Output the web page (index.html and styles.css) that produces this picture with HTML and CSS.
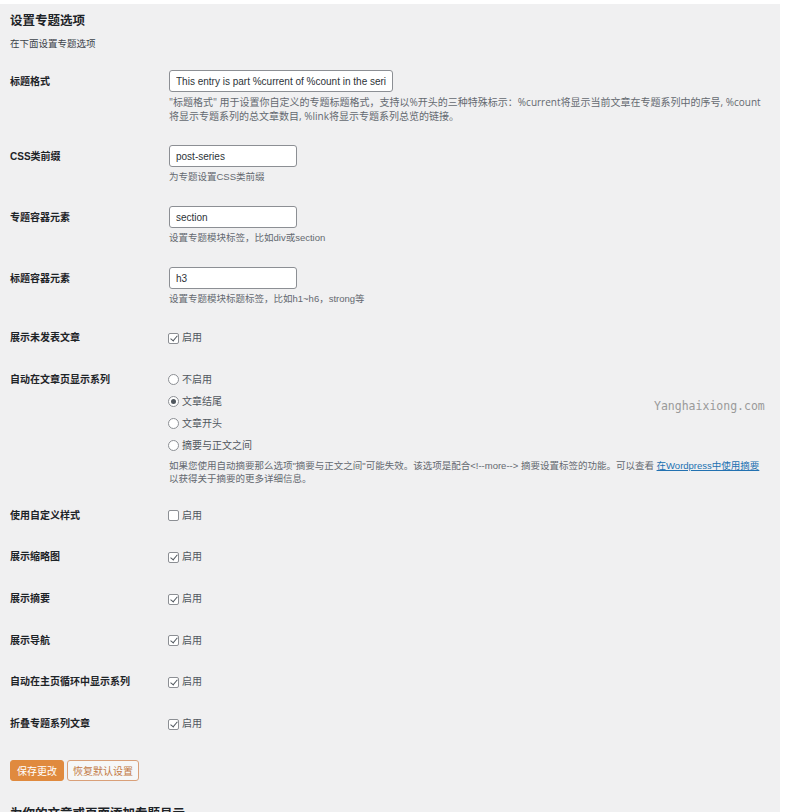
FILE: index.html
```html
<!DOCTYPE html>
<html lang="zh-CN">
<head>
    <meta charset="UTF-8">
    <title>设置专题选项</title>
    <link rel="stylesheet" href="styles.css">
</head>
<body>
    <div class="wrap">
        <h2>设置专题选项</h2>
        <p class="intro">在下面设置专题选项</p>
        <table class="form-table">
            <tr class="text-row">
                <th>标题格式</th>
                <td>
                    <input type="text" class="regular-text" value="This entry is part %current of %count in the series">
                    <p class="description format-help">"标题格式" 用于设置你自定义的专题标题格式，支持以%开头的三种特殊标示：%current将显示当前文章在专题系列中的序号, %count将显示专题系列的总文章数目, %link将显示专题系列总览的链接。</p>
                </td>
            </tr>
            <tr class="text-row">
                <th>CSS类前缀</th>
                <td>
                    <input type="text" class="small-text" value="post-series">
                    <p class="description">为专题设置CSS类前缀</p>
                </td>
            </tr>
            <tr class="text-row">
                <th>专题容器元素</th>
                <td>
                    <input type="text" class="small-text" value="section">
                    <p class="description">设置专题模块标签，比如div或section</p>
                </td>
            </tr>
            <tr class="text-row">
                <th>标题容器元素</th>
                <td>
                    <input type="text" class="small-text" value="h3">
                    <p class="description">设置专题模块标题标签，比如h1~h6，strong等</p>
                </td>
            </tr>
            <tr>
                <th>展示未发表文章</th>
                <td><label class="check"><input type="checkbox" checked> 启用</label></td>
            </tr>
            <tr class="radio-row">
                <th>自动在文章页显示系列</th>
                <td>
                    <label class="radio"><input type="radio" name="auto"> 不启用</label>
                    <label class="radio"><input type="radio" name="auto" checked> 文章结尾</label>
                    <label class="radio"><input type="radio" name="auto"> 文章开头</label>
                    <label class="radio"><input type="radio" name="auto"> 摘要与正文之间</label>
                    <p class="description">如果您使用自动摘要那么选项"摘要与正文之间"可能失效。该选项是配合&lt;!--more--&gt; 摘要设置标签的功能。可以查看 <a href="#">在Wordpress中使用摘要</a> 以获得关于摘要的更多详细信息。</p>
                </td>
            </tr>
            <tr>
                <th>使用自定义样式</th>
                <td><label class="check"><input type="checkbox"> 启用</label></td>
            </tr>
            <tr>
                <th>展示缩略图</th>
                <td><label class="check"><input type="checkbox" checked> 启用</label></td>
            </tr>
            <tr>
                <th>展示摘要</th>
                <td><label class="check"><input type="checkbox" checked> 启用</label></td>
            </tr>
            <tr>
                <th>展示导航</th>
                <td><label class="check"><input type="checkbox" checked> 启用</label></td>
            </tr>
            <tr>
                <th>自动在主页循环中显示系列</th>
                <td><label class="check"><input type="checkbox" checked> 启用</label></td>
            </tr>
            <tr>
                <th>折叠专题系列文章</th>
                <td><label class="check"><input type="checkbox" checked> 启用</label></td>
            </tr>
        </table>
        <p class="submit">
            <button class="button-primary">保存更改</button>
            <button class="button">恢复默认设置</button>
        </p>
        <h2>为你的文章或页面添加专题显示</h2>
        <div class="watermark">Yanghaixiong.com</div>
    </div>
</body>
</html>
```

FILE: styles.css
```css
body {
    margin: 0;
    background-color: #fff;
    font-family: "Liberation Sans", "Noto Sans CJK SC", sans-serif;
    color: #1d2327;
}
.wrap {
    position: relative;
    box-sizing: border-box;
    width: 780px;
    height: 808px;
    margin-top: 4px;
    padding: 9px 0 0 10px;
    background-color: #f0f0f1;
    overflow: hidden;
}
h2 {
    margin: 0;
    font-size: 12.5px;
    line-height: 16px;
    font-weight: bold;
    color: #1d2327;
}
.intro {
    margin: 8px 0 8px;
    font-size: 9.5px;
    line-height: 14px;
    color: #3c434a;
}
.form-table {
    border-collapse: collapse;
    width: 100%;
}
.form-table th {
    width: 159px;
    padding: 14px 0 13.7px;
    text-align: left;
    vertical-align: top;
    font-size: 10px;
    line-height: 14px;
    font-weight: bold;
    color: #1d2327;
}
.form-table td {
    padding: 14px 17px 0 0;
    vertical-align: top;
    font-size: 10px;
    line-height: 14px;
    color: #50575e;
}
.form-table .text-row th {
    padding-top: 16px;
}
.form-table .text-row td {
    padding: 11px 17px 11px 0;
}
.form-table .radio-row td {
    padding: 10px 17px 9px 0;
}
input[type="text"] {
    box-sizing: border-box;
    display: block;
    height: 22px;
    margin: 0;
    padding: 0 6px;
    border: 1px solid #8c8f94;
    border-radius: 3px;
    background-color: #fff;
    font-family: "Liberation Sans", sans-serif;
    font-size: 10px;
    color: #2c3338;
}
.regular-text {
    width: 224px;
}
.small-text {
    width: 128px;
}
.description {
    margin: 3px 0 0;
    font-size: 9.5px;
    line-height: 14px;
    color: #646970;
}
.format-help {
    font-family: "Open Sans", "Noto Sans CJK SC", sans-serif;
    font-size: 10px;
}
.radio-row .description {
    margin-top: 2px;
    line-height: 13.5px;
}
.description a {
    color: #2271b1;
}
.check, .radio {
    display: flex;
    align-items: center;
    height: 14px;
    margin-left: -1px;
}
.radio {
    height: 22px;
}
.check input, .radio input {
    appearance: none;
    box-sizing: border-box;
    position: relative;
    width: 11px;
    height: 11px;
    margin: 0 3px 0 0;
    border: 1px solid #8c8f94;
    background-color: #fff;
}
.check input {
    border-radius: 2px;
}
.check input:checked::before {
    content: "";
    position: absolute;
    left: 3px;
    top: 0px;
    width: 3px;
    height: 6px;
    border: solid #50575e;
    border-width: 0 1.5px 1.5px 0;
    transform: rotate(40deg);
}
.radio input {
    border-radius: 50%;
}
.radio input:checked::before {
    content: "";
    position: absolute;
    left: 2px;
    top: 2px;
    width: 5px;
    height: 5px;
    border-radius: 50%;
    background-color: #50575e;
}
.submit {
    display: flex;
    gap: 3px;
    margin: 15px 0 25px;
}
.submit button {
    height: 21px;
    padding: 0 5px;
    border-radius: 3px;
    font-family: "Noto Sans CJK SC", sans-serif;
    font-size: 10px;
    line-height: 19px;
    cursor: pointer;
}
.button-primary {
    border: 1px solid #e08a3e;
    background-color: #e08a3e;
    color: #fff;
}
.submit .button-primary {
    padding: 0 6px;
}
.submit .button {
    border: 1px solid #d9a079;
    background-color: #f6f7f7;
    color: #c27a46;
}
.watermark {
    position: absolute;
    left: 654px;
    top: 395px;
    font-family: "DejaVu Sans Mono", monospace;
    font-size: 11.5px;
    line-height: 14px;
    color: #9a9a9a;
}
```
